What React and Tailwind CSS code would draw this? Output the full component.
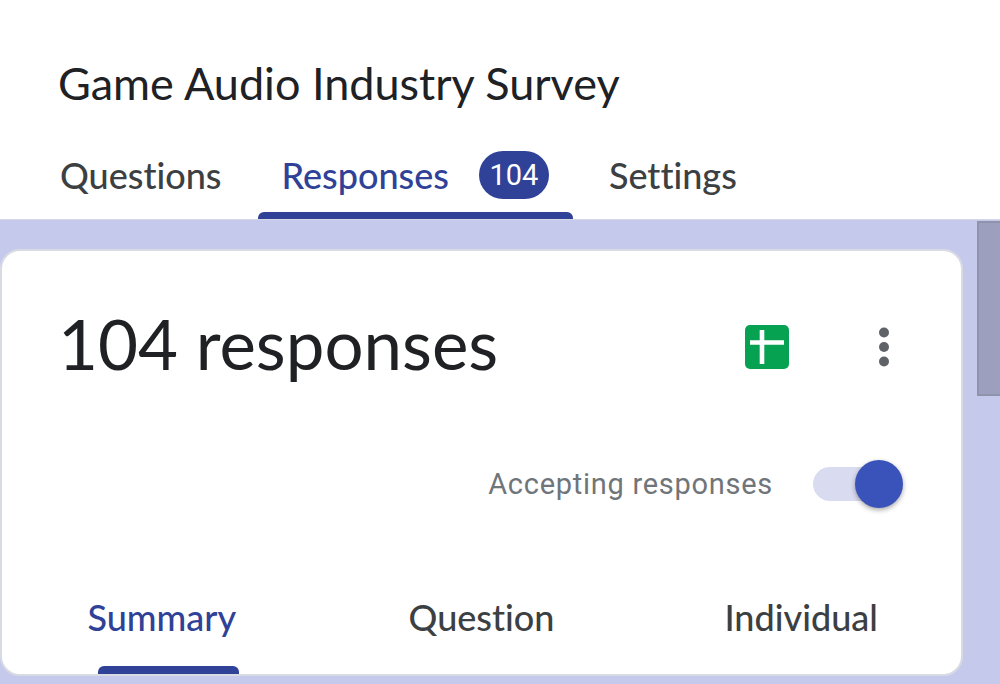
import { useState } from 'react';

const SheetsIcon = () => (
  <svg width="44" height="44" viewBox="0 0 44 44" aria-hidden="true">
    <rect width="44" height="44" rx="5" fill="#06a251" />
    <path d="M5 17.5h34M17 5v34" stroke="#fff" strokeWidth="4.6" fill="none" />
  </svg>
);

const MoreIcon = () => (
  <svg width="10" height="40" viewBox="0 0 10 40" fill="#5f6368" aria-hidden="true">
    <circle cx="5" cy="5.5" r="5" />
    <circle cx="5" cy="20" r="5" />
    <circle cx="5" cy="34.5" r="5" />
  </svg>
);

const FormTab = ({ label, count, active, onClick }) => (
  <button
    role="tab"
    aria-selected={active}
    onClick={onClick}
    className={`relative flex h-[88px] items-center px-6 text-[36px] leading-10 font-medium ${
      active ? 'text-[#2f4297]' : 'text-[#3c4043]'
    }`}
  >
    {label}
    {count && (
      <span className="ml-[30px] flex h-12 w-[70px] items-center justify-center rounded-full bg-[#2f4297] font-[Roboto,sans-serif] text-[29px] font-normal text-white">
        {count}
      </span>
    )}
    {active && <span className="absolute inset-x-0 bottom-0 h-[7px] rounded-t-md bg-[#2f4297]" />}
  </button>
);

const ViewTab = ({ label, active, onClick }) => (
  <button
    role="tab"
    aria-selected={active}
    onClick={onClick}
    className={`relative h-[114px] text-[36px] leading-10 font-medium ${
      active ? 'text-[#2f4297]' : 'text-[#3c4043]'
    }`}
  >
    {label}
    {active && <span className="absolute bottom-0 left-[30%] h-2 w-[44%] rounded-t-md bg-[#2f4297]" />}
  </button>
);

const App = () => {
  const [page, setPage] = useState('Responses');
  const [view, setView] = useState('Summary');
  const [accepting, setAccepting] = useState(true);

  return (
    <div className="flex min-h-screen flex-col bg-[#c5caec] font-[Lato,sans-serif] [font-variant-ligatures:none]">
      <header className="border-b border-[#d5d8e4] bg-white px-9 pt-[57px]">
        <h1 className="px-[22px] text-[45px] leading-[52px] text-[#202124]">Game Audio Industry Survey</h1>
        <div role="tablist" aria-label="Form" className="mt-[22px] flex gap-3">
          <FormTab label="Questions" active={page === 'Questions'} onClick={() => setPage('Questions')} />
          <FormTab label="Responses" count="104" active={page === 'Responses'} onClick={() => setPage('Responses')} />
          <FormTab label="Settings" active={page === 'Settings'} onClick={() => setPage('Settings')} />
        </div>
      </header>

      <div className="flex flex-1 items-start">
        <main className="mt-[29px] mr-3.5 flex-1 rounded-[20px] border-2 border-[#d9dbe3] bg-white">
          <div className="flex items-center pt-[55px] pr-[72px] pl-14">
            <h2 className="flex-1 pb-1.5 text-[69px] leading-[76px] text-[#202124]">104 responses</h2>
            <button aria-label="View in Sheets">
              <SheetsIcon />
            </button>
            <button aria-label="More options" className="ml-[90px]">
              <MoreIcon />
            </button>
          </div>

          <label className="mt-[72px] flex items-center justify-end gap-10 pr-[58px] font-[Roboto,sans-serif] text-[29px] leading-12 tracking-wide text-[#70757a]">
            Accepting responses
            <span className="relative flex h-12 w-[90px] items-center">
              <input
                type="checkbox"
                role="switch"
                checked={accepting}
                onChange={(e) => setAccepting(e.target.checked)}
                className="peer h-[34px] w-20 appearance-none rounded-full bg-gray-300 checked:bg-[#d9dbf1]"
              />
              <span className="pointer-events-none absolute left-0 size-12 rounded-full bg-gray-50 shadow-[0_2px_5px_rgba(0,0,0,0.35)] peer-checked:left-[42px] peer-checked:bg-[#3a53bb]" />
            </span>
          </label>

          <div role="tablist" aria-label="Responses view" className="mt-[52px] grid grid-cols-3">
            <ViewTab label="Summary" active={view === 'Summary'} onClick={() => setView('Summary')} />
            <ViewTab label="Question" active={view === 'Question'} onClick={() => setView('Question')} />
            <ViewTab label="Individual" active={view === 'Individual'} onClick={() => setView('Individual')} />
          </div>
        </main>
        <div className="mt-px h-[175px] w-[23px] border-2 border-r-0 border-[#9193ad] bg-[#9c9fbd]" />
      </div>
    </div>
  );
};

export default App;
